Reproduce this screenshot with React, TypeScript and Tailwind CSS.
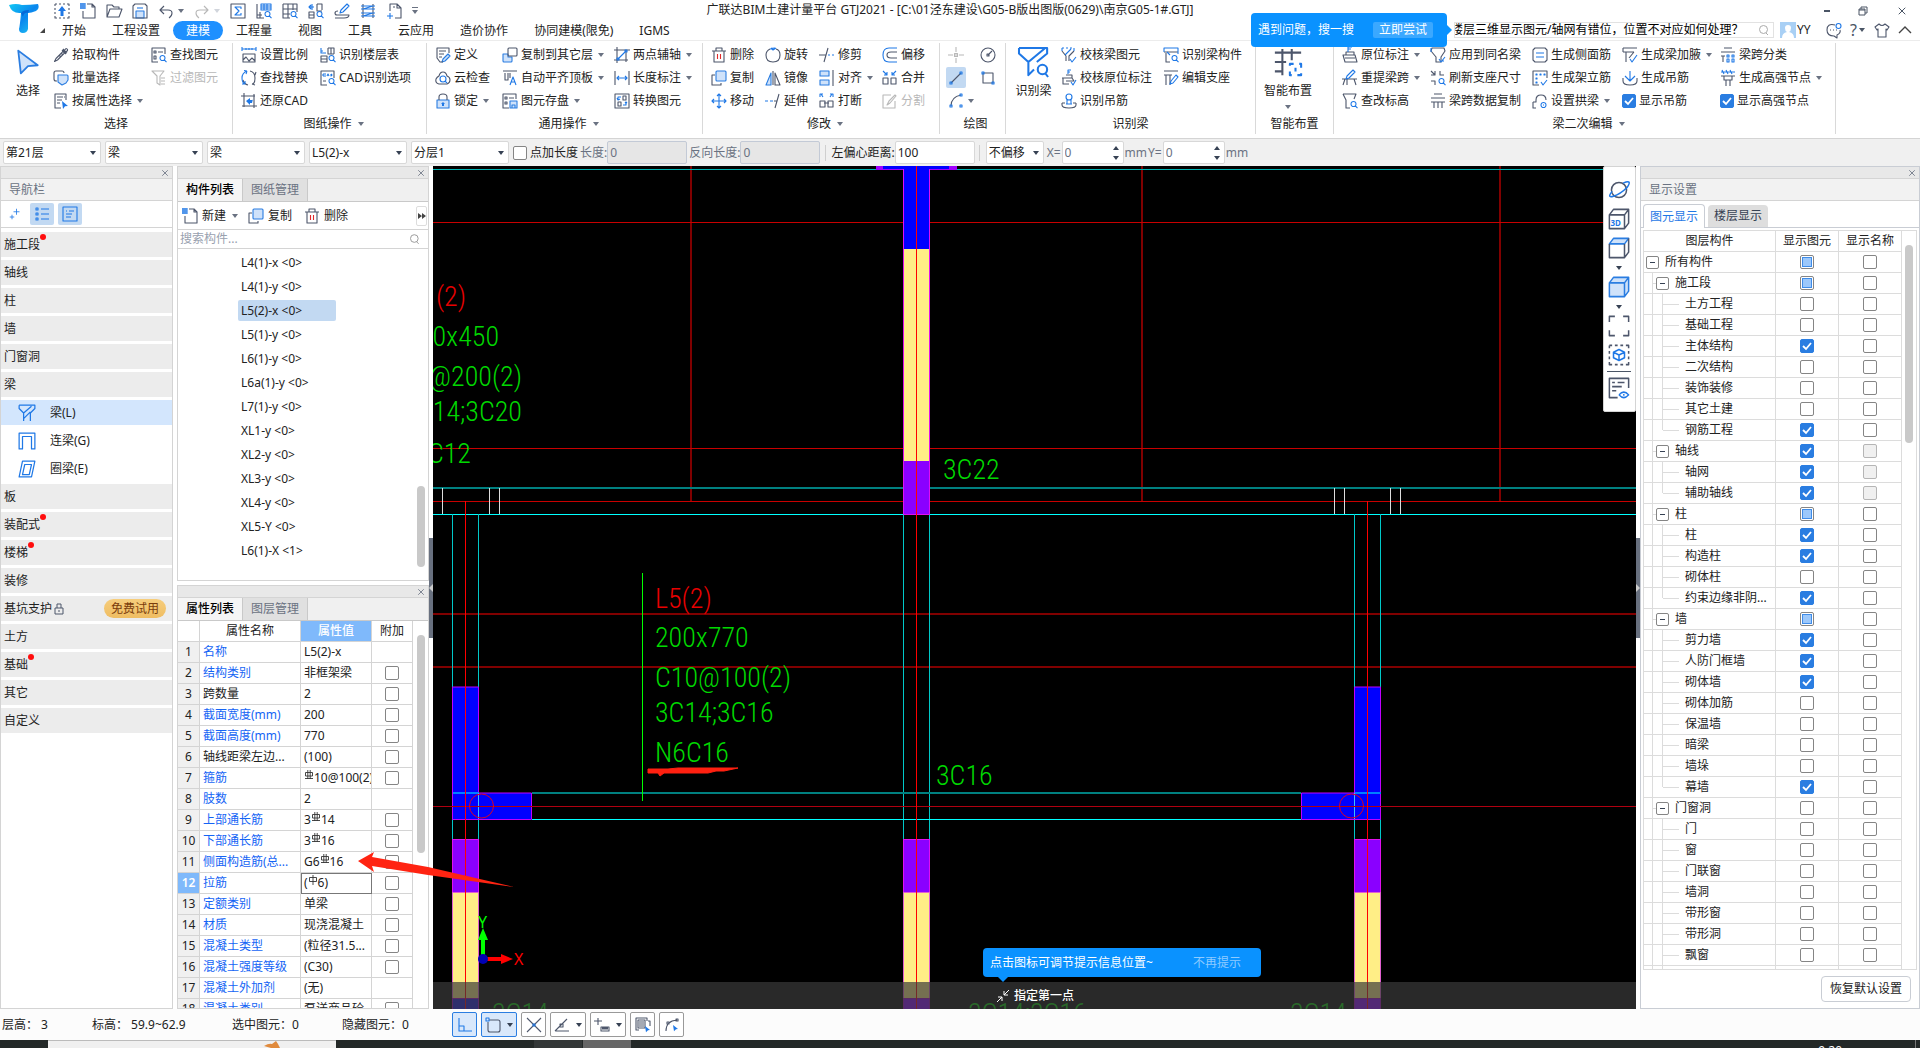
import React from 'react';
import { X } from 'lucide-react';

type Glyph = { d?: string; b?: string; f?: string; s?: string };

const MAG = 'M14 11a2.5 2.5 0 1 1-5 0a2.5 2.5 0 1 1 5 0M13.3 12.8l2.2 2.4';

// d: dark strokes, b: blue strokes, f: blue strokes with a pale fill, s: solid blue
const GLYPHS: Record<string, Glyph> = {
  upload: { d: 'M1 1h2M5 1h2M9 1h2M13 1h2v2M15 5v2M15 9v2M15 13v2h-2M11 15H9M7 15H5M3 15H1v-2M1 11V9M1 7V5M1 3V1', s: 'M8 3l4 5H9.5v5h-3V8H4z' },
  newdoc: { d: 'M7 1h5l3 3v11H3V8M12 1v3h3', b: 'M0 1h5M0 3h5M0 5h5M1 0v6M3 0v6M5 0v6' },
  open: { d: 'M1 14V2h5l2 2h5v2M1 14l3-8h12l-3 8z' },
  save: { d: 'M1 3l2-2h10l2 2v12H1z', f: 'M4 8h8v7H4z', b: 'M5 5h6' },
  undo: { d: 'M6 3L2 7l4 4M2 7h8q4 0 4 3t-3 5' },
  redo: { d: 'M10 3l4 4-4 4M14 7H6q-4 0-4 3t3 5' },
  sigma: { d: 'M1 1h14v14H1z', b: 'M11 6V4H5l4 4-4 4h6v-2' },
  gridfind: { d: 'M1 1v14h7M4 9v6M1 12h5', b: 'M5 1h10v6H5zM5 3h10M5 5h10M8 1v6M11 1v6' + MAG },
  tablefind: { d: 'M1 1h14v8M1 1v14h7M1 6h14M1 11h7M6 1v14M11 1v6', b: MAG },
  swapfind: { d: 'M9 1h5v6M9 1v7h5M1 9h5v6H1zM1 12h5', b: 'M6 4H1l2-2M1 4l2 2M4 1v6' + MAG },
  pen: { d: 'M1 15h9q5 0 5-3H3q-2 0-2-2t3-2', b: 'M13 1l2 2-6 6-3 1 1-3z' },
  rail: { d: 'M3 1v14M13 1v14', b: 'M1 3h14M1 6h14M1 10h14M1 13h14M3 6l10-3M3 13l10-3' },
  addpage: { d: 'M4 8V1h7l4 4v10H9M11 1v4h4M7 4l2 0', b: 'M4 10v6M1 13h6' },
  pointer: { f: 'M2 1l12 9-6 .6L3.600 15z' },
  dropper: { d: 'M9 3l4 4M10.500 4.500L13 1.500q2 .5 1.500 2L12 6M9.500 5L3 11.500l-1.500 3 3-1.500L11 6.500M9.500 4l2.500 2.500 1-1L10.500 3zM10 2l4 4M8 6l2 2M6 8l2 2' },
  batch: { d: 'M4 11H3q-2 0-2-2V3q0-2 2-2h6q2 0 2 2', f: 'M5 5h9q1 0 1 1v4l-2 3-4 2-4-3z' },
  byattr: { d: 'M13 7V1H2v14h6M4 4h6M4 7h5M4 10h3M11 4h1', s: 'M9 8l6 5-3 .3L10 16z' },
  findel: { d: 'M14 7V1H1v14h6M3 4h2v2H3zM7 5h5M3 9h2v3H3z', b: MAG },
  filter: { d: 'M1 1h12L9 6v9l-3-2V6zM10 8h4M10 11h4M10 14h4' },
  scale: { d: 'M2 7h12v8H2zM2 13l3-3 3 4 3-3 3 3', b: 'M1 2h14M1 0v4M15 0v4M5 1v2M8 1v2M11 1v2' },
  floors: { d: 'M8 1h6v6M8 1v6h6M11 1v6M1 9h6v6H1zM1 12h6', b: 'M1 1v5h5M1 4h2' + MAG },
  replace: { d: 'M9 1q5 1 5 7t-3 6M11 14l3 1M14 5l1-3M7 15q-4-1-5-5', b: 'M6 1Q1 3 1 8t3 6M6 1l-3-.5M6 1L5 4M4 14l-3 0M4 14V11' },
  cad: { d: 'M14 8V1H1v14h6M3 11h3', b: 'M3 4h3M3 6h3M3 4v2M7 6l1-2 1 2M11 4v2q2-1 0-2' + MAG },
  restore: { d: 'M3 0v14M0 3h14M13 1v14M1 13h15', s: 'M5 8l4-3v2h3v-1l-1 4H9v2z' },
  define: { d: 'M14 6V1H2v10l3 4h3M4 4h7M4 7h5M4 10h3', f: 'M13 7l2 2-5 5-3 1 1-3z' },
  cloud: { d: 'M4 14q-4-1-3-5 1-2 3-3Q5 2 8 2t4 4q3 1 3 4t-3 4z', b: 'M11 9a3 3 0 1 1-6 0a3 3 0 1 1 6 0M10 11l2 2' },
  lock: { d: 'M4 7V4q0-3 4-3t4 3v3', f: 'M2 7h12v8H2z', s: 'M8 9l2 2H9v2H7v-2H6z' },
  copyto: { d: 'M7 1h7q1 0 1 1v6q0 1-1 1H7q-1 0-1-1V2q0-1 1-1', f: 'M1 7h5v3h4v4q0 1-1 1H2q-1 0-1-1z' },
  align: { d: 'M1 1h14M3 3v7h3V3M8 3v5', b: 'M8 15l3-8 3 8M9 12h4' },
  store: { d: 'M14 6V1H1v14h6M3 4h2v2H3zM7 5h5M3 9h2v2H3z', f: 'M8 8h7v7H8zM10 12h3v3h-3z' },
  auxaxis: { d: 'M3 0v16M0 3h16M12 3v12M0 13h14', b: 'M4 12l8-8M11 3h2v2h-2zM3 11h2v2H3z' },
  dim: { d: 'M1 1v14M15 1v14', b: 'M3 8h10M5 6L3 8l2 2M11 6l2 2-2 2' },
  convert: { d: 'M1 1h14v14H1zM4 9h3v4H4zM9 3h3v4H9z', b: 'M7 4H4v3M3 5l1 2 2-1M9 12h3V9M11 10l1-1 1 1' },
  trash: { d: 'M1 4h14M5 4V1h6v3M3 4v11h10V4' },
  rotate: { d: 'M5 2Q1 4 1 8q0 7 7 7t7-7q0-5-4-6', b: 'M8 3l3-2M8 3l-2-2M5 2q2-1 5-1' },
  trim: { d: 'M9 1L5 15M0 8h7', b: 'M9 8h2M13 8h2' },
  offset: { b: 'M15 1H7Q1 1 1 8t6 7h8', d: 'M15 5H9Q5 5 5 8t4 3h6' },
  copy: { d: 'M4 5H1v10h9v-2', f: 'M6 1h8q1 0 1 1v8q0 1-1 1H6q-1 0-1-1V2q0-1 1-1' },
  mirror: { d: 'M8 1v14M10 3l5 12h-5z', f: 'M6 3v12H1z' },
  align2: { f: 'M1 1h9v5H1zM1 10h9v5H1z', d: 'M14 0v16' },
  merge: { d: 'M1 8h5v6H1zM9 8h5v6H9z', b: 'M1 1l4 4M5 2v3H2M14 1l-4 4M10 2v3h3' },
  move: { b: 'M8 1v14M1 8h14M6 3l2-2 2 2M6 13l2 2 2-2M3 6L1 8l2 2M13 6l2 2-2 2' },
  extend: { b: 'M0 8h3M5 8h3', d: 'M14 1l-4 14M9 8h3' },
  breakk: { d: 'M1 8h5v6H1zM9 8h5v6H9zM5 10h5', b: 'M4 4L2 1M1 4V1h3M11 4l2-3M14 4V1h-3' },
  split: { d: 'M9 2H1v13h12V8M5 12l2-4 6-6 1 1-6 7z' },
  point: { d: 'M8 0v5M8 11v5M0 8h5M11 8h5M6.500 6.500h3v3h-3zM7 8h2' },
  circle: { d: 'M15 8a7 7 0 1 1-14 0a7 7 0 1 1 14 0M8 8l4-4M7 7h2v2H7z' },
  line: { d: 'M3 13L13 3', b: 'M12 2h2v2h-2zM2 12h2v2H2z' },
  rect: { d: 'M3 3h10v10H3z', b: 'M2 2h2v2H2zM12 12h2v2h-2z' },
  arc: { d: 'M3 13Q3 4 13 2', b: 'M12 1h2v2h-2zM2 12h2v2H2zM12 12h2v2h-2z' },
  beam: { b: 'M1 1h14v3l-4 4v7M1 1v3l4 4v7M5 8l7-6M5 13l6-6' },
  findbeam: { b: 'M0 .5h15v3L9.500 8M0 .5v3L5 8v7l3-3M5 8l9-7.500M15 12a2.500 2.500 0 1 1-5 0a2.500 2.500 0 1 1 5 0M14 14l1.500 2' },
  chkbeam: { d: 'M13 4l-5 5v5M1 4l4 5v5', b: 'M1 1h2M5 1h2M9 1h2M13 1v3M1 1v3M4 8l6-6M9 12l2 3 4-5' },
  chktag: { d: 'M1 8h10l2 3H5M2 8v6h6M5 5h6v3', b: 'M7 4V0h3M7 2h2M10 12l2 3 3-5' },
  hook: { d: 'M1 10v2q0 3 7 3t7-3v-2M1 10h3M12 10h3', b: 'M11 4a3 3 0 1 1-6 0a3 3 0 1 1 6 0M6 7v4M10 7v4M5 11h6' },
  recog: { d: 'M1 5h14M3 6v9h4', b: 'M1 5V1h14v6M4 5l3 3' + MAG },
  support: { d: 'M1 1h14M1 5h8M3 5v10M7 5v10', b: 'M13 5l2 2-5 6-3 1 1-3z' },
  smart: { d: 'M1 3h14M1 8h6M1 13h4M5 1v14M10 1v6', b: 'M9 10V9h2M14 9h1v2M15 14v1h-2M10 15H9v-2M12 11v2' },
  tag: { d: 'M1 8h12l2 7H3zM3 11h10M4 8V5h8v3', b: 'M6 5V0h4M6 2h3' },
  respan: { d: 'M0 9h15M3 9l-2 6M12 9l2 6M5 9v6', b: 'M11 0l2 2-6 6-3 1 1-3z' },
  level: { d: 'M1 1h13l-2 5M1 1l3 6v8h4', b: MAG },
  same: { d: 'M2 1h12l1 3-4 6v5H6v-5L1 4z', b: 'M1 1v4M9 12l2 3 4-5M12 14h2' },
  refresh: { d: 'M5 1v4H1M10 1v4h4M5 15v-4H1M1 1l4 4', b: MAG },
  spancopy: { d: 'M4 1h8M1 5h14M1 9h14M4 9v6M8 9v6M12 9v6' },
  side: { d: 'M1 3l2-2h10l2 2v10l-2 2H3l-2-2z', b: 'M4 6h8M4 10h8' },
  stirrup: { d: 'M7 15H1V1h14v7', b: 'M4 4h1v1H4zM8 4h1v1H8zM12 4h1v1h-1zM4 8h1v1H4zM4 12h1v1H4zM9 12l2 3 4-5' },
  arch: { d: 'M1 9h3V7q0-5 5-5t5 5M1 9v6h3', b: 'M14 12a2.500 2.500 0 1 1-5 0a2.500 2.500 0 1 1 5 0M11 12h1' },
  haunch: { d: 'M1 1h14M1 5h11M4 5v10M1 5V1M12 5L7 11', b: 'M8 12l2 3 5-7' },
  hanger: { d: 'M1 8v3q0 4 7 4t7-4V8', b: 'M8 1v9M5 8l3 3 3-3M3 6l2 2M13 6l-2 2' },
  classify: { d: 'M4 1h8M1 5h14M1 9h4M3 9v6', b: 'M7 8h2v2H7zM12 8h2v2h-2zM7 12h2v3H7zM12 12h2v3h-2z' },
  node: { d: 'M1 6h14M4 6v4h8V6M6 10v6M10 10v6', b: 'M1 2h14M2 0l2 4M6 0l2 4M10 0l2 4' },
  spark: { b: 'M10 1v8M6 5h8M4 9v6M1 12h6' },
  list: { b: 'M2 2h2v2H2zM2 7h2v2H2zM2 12h2v2H2zM7 3h8M7 8h8M7 13h8' },
  note: { b: 'M1 1h14v14H1zM4 5h1M7 5h5M4 8h6M4 11h5' },
  linkbeam: { b: 'M1 15V1h14v14h-3V4H4v11z' },
  ringbeam: { b: 'M4 1h11l-3 14H1zM6 4h6l-2 9H4z' },
  planet: { d: 'M13.500 8a5.500 5.500 0 1 1-11 0a5.500 5.500 0 1 1 11 0', b: 'M3 9Q-1 14 4 12.500T14 6q4-6-3-3' },
  cube: { d: 'M1 5h11v10H1zM1 5l3-4h11v10l-3 4M12 5l3-4' },
  cubetop: { d: 'M1 5v10h11V5M15 1v10l-3 4', f: 'M1 5l3-4h11l-3 4z' },
  cubefill: { f: 'M1 5h11v10H1zM1 5l3-4h11l-3 4zM12 5l3-4v10l-3 4z' },
  fit: { d: 'M1 5V1h4M11 1h4v4M15 11v4h-4M5 15H1v-4' },
  isolate: { d: 'M1 1h2M5 1h2M9 1h2M13 1h2v2M15 5v2M15 9v2M15 13v2h-2M11 15H9M7 15H5M3 15H1v-2M1 11V9M1 7V5M1 3V1', b: 'M8 4l4 2v4l-4 2-4-2V6zM4 6l4 2 4-2M8 8v4' },
  listeye: { d: 'M15 8V1H1v14h6M3 4h2M7 4h5M3 7h7M3 10h3', b: 'M8 13q3.500-4 7 0-3.500 4-7 0M11 13h1' },
  ortho: { b: 'M2 1v13h13M2 9h5v5' },
  quad: { d: 'M4 3h9q2 0 2 2v8q0 2-2 2H5q-2 0-2-2V5', b: 'M1 1h3v3H1z' },
  cross: { d: 'M1 1l14 14M15 1L1 15', b: 'M7 7h2v2H7z' },
  angle: { d: 'M1 14h14M1 14L13 2M6 7h3v3H6z' },
  plusbox: { d: 'M4 1v7M0 4h8M7 10h8v4H7zM8 12h6M8 11h6' },
  stack: { d: 'M4 13H1V1h11v3M3 3h7v8H3zM4 5h5M4 7h5M4 9h5M13 4h2v5', s: 'M10 9l5 4-2 .3-2 2z' },
  curve: { d: 'M2 14Q2 4 13 3M12 2h2v2h-2zM3 5h2v2H3z', s: 'M9 8l5 4-2 .3-2 2z' },
  bubble: { d: 'M9 3Q1 1 1 8q0 6 7 6l3 2v-3q4-2 3-5M4 8h1M7 8h1M10 8h1', b: 'M15 4a2.500 2.500 0 1 1-5 0a2.500 2.500 0 1 1 5 0' },
  shirt: { d: 'M5 2L1 5l2 3 1-1v8h8V7l1 1 2-3-4-3q-3 3-6 0z' },
};

function Icon({ name, className = 'size-4', off = false }: { name: string; className?: string; off?: boolean }) {
  const g = GLYPHS[name];
  const dark = off ? '#b8b8b8' : '#4d566b';
  return (
    <svg viewBox="0 0 16 16" className={`shrink-0 overflow-visible ${className}`} fill="none" strokeWidth="1.1" strokeLinejoin="round">
      {g.f && <path d={g.f} stroke="#2a7de1" fill="#cfe2fa" />}
      {g.d && <path d={g.d} stroke={dark} />}
      {g.b && <path d={g.b} stroke={off ? '#b8b8b8' : '#1f78e6'} />}
      {g.s && <path d={g.s} fill="#1f78e6" />}
      {name === 'trash' && <path d="M6.500 7v5M9.500 7v5" stroke="#e02b2b" />}
    </svg>
  );
}

function Caret({ className = 'text-gray-500' }: { className?: string }) {
  return (
    <svg viewBox="0 0 6 4" className={`h-1 w-1.5 shrink-0 ${className}`}>
      <path d="M0 0h6L3 4z" fill="currentColor" />
    </svg>
  );
}

type CheckState = 'on' | 'off' | 'mixed' | 'disabled';

function Check({ state = 'off', label, id }: { state?: CheckState; label?: string; id?: string }) {
  return (
    <span className="relative inline-block size-3.5 shrink-0 align-middle">
      <input
        id={id}
        type="checkbox"
        aria-label={label}
        defaultChecked={state === 'on'}
        disabled={state === 'disabled'}
        className="block size-3.5 appearance-none rounded-xs border border-[#858585] bg-white checked:border-[#2a7de1] checked:bg-[#2a7de1] disabled:border-[#b5b5b5] disabled:bg-[#f0f0f0]"
      />
      {state === 'on' && (
        <svg viewBox="0 0 14 14" className="pointer-events-none absolute inset-0" fill="none" stroke="white" strokeWidth="1.8">
          <path d="M3 7l3 3 5-6" />
        </svg>
      )}
      {state === 'mixed' && <span className="pointer-events-none absolute inset-0.5 border border-[#3f8ce8] bg-[#9cc8fb]" />}
    </span>
  );
}

type Item = { icon: string; text: string; caret?: boolean; off?: boolean; check?: boolean };

function ToolColumn({ items, className }: { items: Item[]; className: string }) {
  return (
    <div className={`flex shrink-0 flex-col ${className}`}>
      {items.map((it) =>
        it.check ? (
          <label key={it.text} className="flex h-[23px] items-center gap-[3px] whitespace-nowrap">
            <Check state="on" />
            {it.text}
          </label>
        ) : (
          <button key={it.text} disabled={it.off} className={`flex h-[23px] items-center gap-[3px] whitespace-nowrap ${it.off ? 'text-[#b8b8b8]' : ''}`}>
            <Icon name={it.icon} off={it.off} />
            <span>{it.text}</span>
            {it.caret && <Caret className="ml-0.5 text-gray-500" />}
          </button>
        ),
      )}
    </div>
  );
}

function Group({ label, caret, className = '', children }: { label: string; caret?: boolean; className?: string; children: React.ReactNode }) {
  return (
    <section className={`flex shrink-0 flex-col border-r border-[#d9d9d9] ${className}`}>
      <div className="flex h-[72px]">{children}</div>
      <div className="flex h-5 items-center justify-center gap-1.5">
        {label}
        {caret && <Caret className="text-gray-500" />}
      </div>
    </section>
  );
}

function BigButton({ icon, text, caret, className, size = 'size-[30px]' }: { icon: string; text: string; caret?: boolean; className: string; size?: string }) {
  return (
    <button className={`flex shrink-0 flex-col items-center pt-1 ${className}`}>
      <span className="flex h-[30px] items-center"><Icon name={icon} className={size} /></span>
      <span className="mt-1.5">{text}</span>
      {caret && <Caret className="mt-1.5 text-gray-500" />}
    </button>
  );
}

const QUICK = ['upload', 'newdoc', 'open', 'save'];
const QUICK2 = ['sigma', 'gridfind', 'tablefind', 'swapfind', 'pen', 'rail', 'addpage'];
const TABS = ['开始', '工程设置', '建模', '工程量', '视图', '工具', '云应用', '造价协作', '协同建模(限免)', 'IGMS'];

function TitleArea() {
  return (
    <header className="relative flex h-[41px] border-b border-[#ececec] bg-white">
      <div className="flex w-[49px] shrink-0 pt-1 pl-2">
        <svg viewBox="0 0 32 30" className="h-[30px] w-8">
          <defs>
            <linearGradient id="logo" x1="0" y1="0" x2="1" y2="1">
              <stop offset="0" stopColor="#12c8f4" />
              <stop offset="0.5" stopColor="#0a86ee" />
              <stop offset="1" stopColor="#25d0f5" />
            </linearGradient>
          </defs>
          <path d="M1 1Q8-1 14 1q8 0 16-1 2 5-2 7-5 2-8 2 0 5 0 16-1 4-5 4t-4-4q1-4 2-16-9 1-12-8z" fill="url(#logo)" />
          <path d="M13 9q2-3 8-3l-1 3q-4-1-5 4z" fill="#0569d8" />
        </svg>
        <svg viewBox="0 0 5 5" className="mt-6 size-[5px]">
          <path d="M5 0v5H0z" fill="#444" />
        </svg>
      </div>
      <div className="flex flex-col">
        <div className="flex h-[22px] items-center gap-2.5 pl-[5px]">
          {QUICK.map((n) => (
            <button key={n} aria-label={n}><Icon name={n} /></button>
          ))}
          <button aria-label="undo" className="flex items-center gap-1"><Icon name="undo" /><Caret /></button>
          <button aria-label="redo" className="flex items-center gap-1"><Icon name="redo" off /><Caret className="text-gray-300" /></button>
          {QUICK2.map((n) => (
            <button key={n} aria-label={n}><Icon name={n} /></button>
          ))}
          <button aria-label="more" className="flex flex-col items-center gap-0.5">
            <span className="h-px w-1.5 bg-gray-500" />
            <Caret />
          </button>
        </div>
        <nav className="flex h-[19px]">
          {TABS.map((t) => (
            <button key={t} className={`flex items-center px-[13px] ${t === '建模' ? 'rounded-full bg-[#1e90ff] text-white' : ''}`}>
              {t}
            </button>
          ))}
        </nav>
      </div>
      <h1 className="pt-0.5 pl-6 font-normal whitespace-nowrap">
        广联达BIM土建计量平台 GTJ2021 - [C:\01泾东建设\G05-B版出图版(0629)\南京G05-1#.GTJ]
      </h1>
      <div className="ml-auto flex flex-col">
        <div className="flex h-[22px] items-center justify-end gap-7 pr-3 text-gray-600">
          <button aria-label="minimize"><span className="block h-0.5 w-1.5 bg-gray-600" /></button>
          <button aria-label="restore">
            <svg viewBox="0 0 10 10" className="size-2.5" fill="none" stroke="currentColor"><path d="M1 3h6v6H1zM3 3V1h6v6H7M1 4h6" /></svg>
          </button>
          <button aria-label="close"><X size={12} /></button>
        </div>
        <div className="flex h-4 items-center">
          <div className="flex h-4 w-80 items-center border border-[#e2e2e2]">
            <input
              aria-label="搜索"
              defaultValue="楼层三维显示图元/轴网有错位，位置不对应如何处理？"
              className="w-[304px] -indent-1 text-black outline-none"
            />
            <svg viewBox="0 0 10 10" className="size-2.5" fill="none" stroke="#aaa"><circle cx="4.500" cy="4.500" r="4" /><path d="M7 8l2 2" /></svg>
          </div>
          <svg viewBox="0 0 16 16" className="ml-1.5 size-4">
            <path d="M0 0h16v16H0z" fill="#a9d0f5" />
            <path d="M8 3q3 0 3 3t-2 4q5 1 5 6H2q0-5 5-6-2-1-2-4t3-3z" fill="#fff" />
          </svg>
          <span className="w-[30px] pl-px">YY</span>
          <button aria-label="messages"><Icon name="bubble" /></button>
          <button aria-label="help" className="ml-2 flex w-5 items-center text-base leading-4 text-gray-600">?<Caret className="ml-0.5 text-gray-600" /></button>
          <button aria-label="skin" className="ml-1"><Icon name="shirt" /></button>
          <button aria-label="collapse" className="mr-2 ml-2">
            <svg viewBox="0 0 14 8" className="h-2 w-3.5" fill="none" stroke="#444" strokeWidth="1.4"><path d="M1 7l6-6 6 6" /></svg>
          </button>
        </div>
      </div>
      <div className="absolute top-[13px] right-[473px] z-10 flex h-[34px] w-[196px] items-center justify-between rounded-sm bg-[#0a92ff] pr-3.5 pl-[7px] whitespace-nowrap text-white">
        <span>遇到问题，搜一搜</span>
        <button className="rounded-xs bg-[#3ba8ff] px-1.5">立即尝试</button>
        <svg viewBox="0 0 5 10" className="absolute top-3 left-full h-2.5 w-[5px]"><path d="M0 0l5 5-5 5z" fill="#0a92ff" /></svg>
      </div>
    </header>
  );
}

function Ribbon() {
  return (
    <div className="flex h-[98px] border-b border-[#d4d4d4] bg-white pt-0.5 pb-1">
      <Group label="选择" className="w-[233px]">
        <BigButton icon="pointer" text="选择" className="w-[53px] pl-[3px]" size="size-[26px]" />
        <ToolColumn className="w-[98px]" items={[{ icon: 'dropper', text: '拾取构件' }, { icon: 'batch', text: '批量选择' }, { icon: 'byattr', text: '按属性选择', caret: true }]} />
        <ToolColumn className="w-20" items={[{ icon: 'findel', text: '查找图元' }, { icon: 'filter', text: '过滤图元', off: true }]} />
      </Group>
      <Group label="图纸操作" caret className="w-[194px] pl-2">
        <ToolColumn className="w-[79px]" items={[{ icon: 'scale', text: '设置比例' }, { icon: 'replace', text: '查找替换' }, { icon: 'restore', text: '还原CAD' }]} />
        <ToolColumn className="w-24" items={[{ icon: 'floors', text: '识别楼层表' }, { icon: 'cad', text: 'CAD识别选项' }]} />
      </Group>
      <Group label="通用操作" caret className="w-[276px] pl-2">
        <ToolColumn className="w-[67px]" items={[{ icon: 'define', text: '定义' }, { icon: 'cloud', text: '云检查' }, { icon: 'lock', text: '锁定', caret: true }]} />
        <ToolColumn className="w-28" items={[{ icon: 'copyto', text: '复制到其它层', caret: true }, { icon: 'align', text: '自动平齐顶板', caret: true }, { icon: 'store', text: '图元存盘', caret: true }]} />
        <ToolColumn className="w-20" items={[{ icon: 'auxaxis', text: '两点辅轴', caret: true }, { icon: 'dim', text: '长度标注', caret: true }, { icon: 'convert', text: '转换图元' }]} />
      </Group>
      <Group label="修改" caret className="w-[237px] pl-2">
        <ToolColumn className="w-[54px]" items={[{ icon: 'trash', text: '删除' }, { icon: 'copy', text: '复制' }, { icon: 'move', text: '移动' }]} />
        <ToolColumn className="w-[54px]" items={[{ icon: 'rotate', text: '旋转' }, { icon: 'mirror', text: '镜像' }, { icon: 'extend', text: '延伸' }]} />
        <ToolColumn className="w-[63px]" items={[{ icon: 'trim', text: '修剪' }, { icon: 'align2', text: '对齐', caret: true }, { icon: 'breakk', text: '打断' }]} />
        <ToolColumn className="w-[54px]" items={[{ icon: 'offset', text: '偏移' }, { icon: 'merge', text: '合并' }, { icon: 'split', text: '分割', off: true }]} />
      </Group>
      <Group label="绘图" className="w-[66px] pl-1.5">
        <div className="flex w-8 flex-col">
          <button aria-label="点" className="flex h-[23px] w-5 items-center justify-center"><Icon name="point" off /></button>
          <button aria-label="直线" className="my-px flex h-[21px] w-5 items-center justify-center rounded-xs bg-[#c2d9f2]"><Icon name="line" /></button>
          <button aria-label="弧" className="flex h-[23px] items-center gap-1 pl-0.5"><Icon name="arc" /><Caret /></button>
        </div>
        <div className="flex w-5 flex-col">
          <button aria-label="圆" className="flex h-[23px] items-center justify-center"><Icon name="circle" /></button>
          <button aria-label="矩形" className="flex h-[23px] items-center justify-center"><Icon name="rect" /></button>
        </div>
      </Group>
      <Group label="识别梁" className="w-[250px]">
        <BigButton icon="findbeam" text="识别梁" className="w-[55px]" />
        <ToolColumn className="w-[102px]" items={[{ icon: 'chkbeam', text: '校核梁图元' }, { icon: 'chktag', text: '校核原位标注' }, { icon: 'hook', text: '识别吊筋' }]} />
        <ToolColumn className="w-20" items={[{ icon: 'recog', text: '识别梁构件' }, { icon: 'support', text: '编辑支座' }]} />
      </Group>
      <Group label="智能布置" className="w-[78px]">
        <BigButton icon="smart" text="智能布置" caret className="w-16" />
      </Group>
      <Group label="梁二次编辑" caret className="w-[502px] pl-2">
        <ToolColumn className="w-[88px]" items={[{ icon: 'tag', text: '原位标注', caret: true }, { icon: 'respan', text: '重提梁跨', caret: true }, { icon: 'level', text: '查改标高' }]} />
        <ToolColumn className="w-[102px]" items={[{ icon: 'same', text: '应用到同名梁' }, { icon: 'refresh', text: '刷新支座尺寸' }, { icon: 'spancopy', text: '梁跨数据复制' }]} />
        <ToolColumn className="w-[90px]" items={[{ icon: 'side', text: '生成侧面筋' }, { icon: 'stirrup', text: '生成架立筋' }, { icon: 'arch', text: '设置拱梁', caret: true }]} />
        <ToolColumn className="w-[98px]" items={[{ icon: 'haunch', text: '生成梁加腋', caret: true }, { icon: 'hanger', text: '生成吊筋' }, { icon: '', text: '显示吊筋', check: true }]} />
        <ToolColumn className="w-[110px]" items={[{ icon: 'classify', text: '梁跨分类' }, { icon: 'node', text: '生成高强节点', caret: true }, { icon: '', text: '显示高强节点', check: true }]} />
      </Group>
    </div>
  );
}

function Drop({ value, className }: { value: string; className: string }) {
  return (
    <span className={`relative flex h-[23px] shrink-0 items-center rounded-xs border border-[#d8d8d8] bg-white ${className}`}>
      <select aria-label={value} className="h-full w-full appearance-none pl-0.5 outline-none">
        <option>{value}</option>
      </select>
      <span className="pointer-events-none absolute right-1 flex"><Caret className="text-gray-700" /></span>
    </span>
  );
}

function Field({ id, label, value, off, className }: { id: string; label: string; value: string; off?: boolean; className: string }) {
  return (
    <>
      <label htmlFor={id} className={`whitespace-nowrap ${off ? 'text-gray-500' : ''}`}>{label}</label>
      <input
        id={id}
        defaultValue={value}
        disabled={off}
        className={`h-[23px] rounded-xs border pl-0.5 ${off ? 'border-[#c3cad6] bg-[#e6e6e6] text-gray-500' : 'border-[#d8d8d8] bg-white'} ${className}`}
      />
    </>
  );
}

function Spin({ id, label }: { id: string; label: string }) {
  return (
    <span className="flex items-center text-gray-500">
      <label htmlFor={id} className="pr-px">{label}</label>
      <span className="flex h-[23px] w-[62px] items-center justify-between rounded-xs border border-[#d8d8d8] bg-white pr-1">
        <input id={id} defaultValue="0" className="w-10 pl-0.5 outline-none" />
        <span className="flex flex-col gap-1.5">
          <Caret className="rotate-180 text-gray-700" />
          <Caret className="text-gray-700" />
        </span>
      </span>
      <span className="pl-px">mm</span>
    </span>
  );
}

function OptionBar() {
  return (
    <div className="flex h-[27px] items-center bg-[#f0f0f0] pl-[3px]">
      <div className="flex gap-1">
        <Drop value="第21层" className="w-[98px]" />
        <Drop value="梁" className="w-[98px]" />
        <Drop value="梁" className="w-[98px]" />
        <Drop value="L5(2)-x" className="w-[98px]" />
        <Drop value="分层1" className="w-[98px]" />
      </div>
      <label className="mr-0.5 ml-1 flex items-center gap-[3px] whitespace-nowrap">
        <Check />
        点加长度
      </label>
      <Field id="len" label="长度:" value="0" off className="mr-0.5 w-20" />
      <Field id="rlen" label="反向长度:" value="0" off className="w-20" />
      <span className="mx-[5px] h-4 w-px bg-[#cfcfcf]" />
      <Field id="ecc" label="左偏心距离:" value="100" className="w-20" />
      <span className="mr-1.5 ml-1 h-4 w-px bg-[#cfcfcf]" />
      <Drop value="不偏移" className="mr-[3px] w-[58px]" />
      <Spin id="ox" label="X=" />
      <span className="w-px" />
      <Spin id="oy" label="Y=" />
    </div>
  );
}

function PanelTop() {
  return (
    <div className="flex h-3 shrink-0 items-center justify-end border-b border-[#d4d4d4] bg-[#e8e8e8] pr-0.5">
      <button aria-label="关闭"><X size={10} className="text-gray-500" /></button>
    </div>
  );
}

type NavItem = { text: string; dot?: boolean; trial?: boolean; icon?: string; active?: boolean };

const NAV: NavItem[] = [
  { text: '施工段', dot: true },
  { text: '轴线' },
  { text: '柱' },
  { text: '墙' },
  { text: '门窗洞' },
  { text: '梁' },
  { text: '梁(L)', icon: 'beam', active: true },
  { text: '连梁(G)', icon: 'linkbeam' },
  { text: '圈梁(E)', icon: 'ringbeam' },
  { text: '板' },
  { text: '装配式', dot: true },
  { text: '楼梯', dot: true },
  { text: '装修' },
  { text: '基坑支护', trial: true },
  { text: '土方' },
  { text: '基础', dot: true },
  { text: '其它' },
  { text: '自定义' },
];

function NavPanel() {
  return (
    <aside className="flex w-[173px] shrink-0 flex-col border border-[#d4d4d4] bg-white">
      <PanelTop />
      <div className="h-[22px] border-b border-[#d4d4d4] bg-[#f2f2f2] pl-2 leading-[21px] text-gray-500">导航栏</div>
      <div className="flex h-[27px] items-center gap-1 border-b border-[#d4d4d4] pl-1">
        <button aria-label="展开" className="flex w-[21px] items-center pl-1"><Icon name="spark" className="size-3" /></button>
        <button aria-label="列表" className="flex h-[22px] w-6 items-center justify-center rounded-xs bg-[#c2d9f2]"><Icon name="list" /></button>
        <button aria-label="详情" className="flex h-[22px] w-6 items-center justify-center rounded-xs bg-[#c2d9f2]"><Icon name="note" /></button>
      </div>
      <ul className="flex flex-col gap-[3px] pt-1">
        {NAV.map((n) => (
          <li key={n.text}>
            <button
              className={`flex h-[25px] w-full items-center ${n.icon ? 'gap-3.5 pl-[17px]' : 'bg-[#ececec] pr-1.5 pl-[3px]'} ${n.active ? 'bg-[#d3e6fd]' : ''}`}
            >
              {n.icon && <Icon name={n.icon} className="size-[18px]" />}
              <span>{n.text}</span>
              {n.dot && <span className="mb-4 size-1.5 rounded-full bg-[#ff0d0d]" />}
              {n.trial && (
                <>
                  <svg viewBox="0 0 10 12" className="ml-0.5 h-3 w-2.5" fill="none" stroke="#4d566b">
                    <path d="M1 5h8v6H1zM3 5V1h4v4M5 7v2" />
                  </svg>
                  <span className="ml-auto rounded-full bg-linear-to-b from-[#f6cd7c] to-[#efbd62] px-[7px] leading-[19px] text-[#7a3c0c]">免费试用</span>
                </>
              )}
            </button>
          </li>
        ))}
      </ul>
    </aside>
  );
}

function PanelTabs({ tabs }: { tabs: [string, string] }) {
  return (
    <div className="flex h-[23px] shrink-0 border-b border-[#c9c9c9] bg-[#f0f0f0]">
      <button className="w-[65px] border-r border-[#c9c9c9] bg-[#f5f5f5] font-medium text-black">{tabs[0]}</button>
      <button className="w-[65px] border-r border-[#c9c9c9] bg-[#e0e0e0] text-gray-500">{tabs[1]}</button>
    </div>
  );
}

const COMPONENTS = [
  'L4(1)-x <0>', 'L4(1)-y <0>', 'L5(2)-x <0>', 'L5(1)-y <0>', 'L6(1)-y <0>', 'L6a(1)-y <0>', 'L7(1)-y <0>',
  'XL1-y <0>', 'XL2-y <0>', 'XL3-y <0>', 'XL4-y <0>', 'XL5-Y <0>', 'L6(1)-X <1>',
];

function ComponentPanel() {
  return (
    <section className="flex h-[415px] shrink-0 flex-col border border-[#d4d4d4] bg-white">
      <PanelTop />
      <PanelTabs tabs={['构件列表', '图纸管理']} />
      <div className="flex h-7 shrink-0 items-center border-b border-[#d4d4d4] pl-1">
        <button className="flex items-center gap-1"><Icon name="newdoc" />新建<Caret className="mr-1.5 ml-0.5 text-gray-500" /></button>
        <button className="ml-1 flex items-center gap-1"><Icon name="copy" />复制</button>
        <button className="ml-3 flex items-center gap-1"><Icon name="trash" />删除</button>
        <button aria-label="更多" className="mr-px ml-auto flex h-5 w-[11px] items-center justify-center rounded-xs border border-[#ddd]">
          <svg viewBox="0 0 8 6" className="h-1.5 w-2 shrink-0"><path d="M0 0l4 3-4 3zM4 0l4 3-4 3z" fill="#444" /></svg>
        </button>
      </div>
      <div className="flex h-[19px] shrink-0 items-center border-b border-[#d4d4d4] pr-2 pl-0.5">
        <input aria-label="搜索构件" placeholder="搜索构件..." className="w-full outline-none placeholder:text-gray-400" />
        <svg viewBox="0 0 10 10" className="size-2.5" fill="none" stroke="#999"><circle cx="4.500" cy="4.500" r="4" /><path d="M7 8l2 2" /></svg>
      </div>
      <div className="relative flex-1">
        <ul className="pt-px pl-[60px]">
          {COMPONENTS.map((c) => (
            <li key={c} className="flex h-6 items-center">
              <span className={`w-[98px] rounded-xs pl-[3px] leading-[21px] whitespace-nowrap ${c === 'L5(2)-x <0>' ? 'bg-[#c2d9f2]' : ''}`}>{c}</span>
            </li>
          ))}
        </ul>
        <div className="absolute right-[3px] bottom-[13px] h-[81px] w-2 rounded-full bg-[#c9c9c9]" />
      </div>
    </section>
  );
}

function Rebar({ grade = 3 }: { grade?: number }) {
  return (
    <svg viewBox="0 0 10 10" className="mb-1.5 inline-block size-2.5 align-middle" fill="none" stroke="#333" strokeWidth="0.9">
      {grade === 3 ? <path d="M1.500 2.500h7v3.500h-7zM3.800 0v9M6.200 0v9M1 8.500h8" /> : <path d="M1.500 2.500h7v4h-7zM5 0v10" />}
    </svg>
  );
}

type Prop = { name: string; value: React.ReactNode; plain?: boolean; noCheck?: boolean };

const PROPS: Prop[] = [
  { name: '名称', value: 'L5(2)-x', noCheck: true },
  { name: '结构类别', value: '非框架梁' },
  { name: '跨数量', value: '2', plain: true },
  { name: '截面宽度(mm)', value: '200' },
  { name: '截面高度(mm)', value: '770' },
  { name: '轴线距梁左边...', value: '(100)', plain: true },
  { name: '箍筋', value: <><Rebar />10@100(2)</> },
  { name: '肢数', value: '2', noCheck: true },
  { name: '上部通长筋', value: <>3<Rebar />14</> },
  { name: '下部通长筋', value: <>3<Rebar />16</> },
  { name: '侧面构造筋(总...', value: <>G6<Rebar />16</> },
  { name: '拉筋', value: <>(<Rebar grade={1} />6)</> },
  { name: '定额类别', value: '单梁' },
  { name: '材质', value: '现浇混凝土' },
  { name: '混凝土类型', value: '(粒径31.5...' },
  { name: '混凝土强度等级', value: '(C30)' },
  { name: '混凝土外加剂', value: '(无)', noCheck: true },
  { name: '混凝土类别', value: '泵送商品砼' },
];

function PropertyPanel() {
  const cell = 'h-[21px] border-r border-b border-[#d4d4d4] p-0';
  return (
    <section className="flex min-h-0 flex-1 flex-col border border-[#d4d4d4] bg-white">
      <PanelTop />
      <PanelTabs tabs={['属性列表', '图层管理']} />
      <div className="relative min-h-0 flex-1 overflow-hidden">
        <table className="w-[235px] table-fixed border-separate border-spacing-0">
          <colgroup>
            <col className="w-[22px]" />
            <col className="w-[101px]" />
            <col className="w-[71px]" />
            <col className="w-[41px]" />
          </colgroup>
          <thead>
            <tr>
              <th className={cell} />
              <th className={`${cell} font-normal`}>属性名称</th>
              <th className={`${cell} bg-[#7fb9fb] font-medium text-white`}>属性值</th>
              <th className={`${cell} font-normal`}>附加</th>
            </tr>
          </thead>
          <tbody>
            {PROPS.map((p, i) => (
              <tr key={p.name}>
                <td className={`${cell} text-center ${i === 11 ? 'bg-[#7fb9fb] font-semibold text-white' : 'bg-[#f0f0f0]'}`}>{i + 1}</td>
                <td className={`${cell} overflow-hidden pl-[3px] whitespace-nowrap ${p.plain ? '' : 'text-[#1464f5]'}`}>{p.name}</td>
                <td className={`${cell} overflow-hidden pl-[3px] leading-4 whitespace-nowrap ${i === 11 ? 'outline -outline-offset-1 outline-[#777]' : ''}`}>{p.value}</td>
                <td className={`${cell} text-center leading-none`}>{!p.noCheck && <Check label={p.name} />}</td>
              </tr>
            ))}
          </tbody>
        </table>
        <div className="absolute top-3.5 right-[3px] h-[218px] w-2 rounded-full bg-[#c9c9c9]" />
      </div>
    </section>
  );
}

// dimension text of the drawing: x, baseline, content
const NOTES: [number, number, string][] = [
  [655, 647, '200x770'],
  [655, 687, 'C10@100(2)'],
  [655, 722, '3C14;3C16'],
  [655, 762, 'N6C16'],
  [936, 785, '3C16'],
  [943, 479, '3C22'],
  [492, 1023, '3C14'],
  [968, 1023, '3C14;3C16'],
  [1290, 1023, '3C14'],
];
const LEFT_NOTES: [number, number, string][] = [
  [499, 346, '0x450'],
  [522, 386, '@200(2)'],
  [522, 421, '14;3C20'],
  [471, 463, 'C12'],
];

function Drawing() {
  return (
    <svg viewBox="433 166 1203 843" preserveAspectRatio="xMidYMid slice" className="absolute inset-0 h-full w-full" fill="none">
      <g strokeWidth="2" stroke="#800000">
        <path d="M691 166V501M1142 166V501M1500 166V501M433 614H1636M433 667H1636" />
      </g>
      <path d="M433 222.500H1636M433 448.500H1636M433 501.500H1636" stroke="#c80000" />
      <path d="M433 169.500H1636" stroke="#00b4b4" />
      <path d="M433 488H1636" stroke="#008080" strokeWidth="2" />
      <path d="M433 514.500H1636" stroke="#00ffff" />
      <path d="M452.500 514V1009M478.500 514V1009M903.500 514V1009M929.500 514V1009M1354.500 514V840M1380.500 514V840" stroke="#00c8c8" />
      <path d="M442.500 488v26M489.500 488v26M499.500 488v26M1334.500 488v26M1344.500 488v26M1390.500 488v26M1400.500 488v26" stroke="#ddd" />
      <path d="M532 793H1301" stroke="#008080" strokeWidth="2" />
      <path d="M532 819.500H1301" stroke="#00ffff" />

      <path d="M876 166h81v4h-81z" fill="#a000ff" />
      <path d="M883 166h66v3h-66zM904 166h26v83h-26z" fill="#0000ff" />
      <path d="M904 249h26v212h-26z" fill="#ffee86" />
      <path d="M904 461h26v53h-26z" fill="#8a00ff" />
      <path d="M903.500 169V514.500h26V169" stroke="#e010f0" />

      <path d="M452.500 687h26v106h53v26.500h-79z" fill="#0000ff" stroke="#c000ff" />
      <path d="M1354.500 687h26v132.500h-79V793h53z" fill="#0000ff" stroke="#c000ff" />
      <path d="M453 793h26M1355 793h26" stroke="#0080ff" strokeWidth="2" />
      <path d="M478.500 793v26M1354.500 793v26" stroke="#40c0ff" />

      {[452.5, 903.5, 1354.5].map((x, i) => (
        <g key={x}>
          <rect x={x} y="839.500" width="26" height="53" fill="#8a00ff" stroke="#e010f0" />
          <rect x={x} y="892.500" width="26" height="106" fill="#ffee86" stroke="#e060d0" />
          <rect x={x} y="998.500" width="26" height="20" fill={i === 0 ? '#1414e0' : '#8a00ff'} stroke="#a000c0" />
        </g>
      ))}
      <path d="M433 806.500H1636" stroke="#b00010" />
      <path d="M465.500 501V1009M916.500 166V1009M1367.500 501V1009" stroke="#ff0000" />
      <circle cx="481.500" cy="806" r="12" stroke="#e00020" />
      <circle cx="1351.500" cy="806" r="12" stroke="#e00020" />
      <path d="M642.500 573V801" stroke="#00ff00" />

      <g className="font-[Roboto_Condensed,Liberation_Sans_Narrow,Roboto] text-[28px] font-light">
        <text x="655" y="608" fill="#e80000">L5(2)</text>
        <text x="466" y="306" textAnchor="end" fill="#e80000">(2)</text>
        {NOTES.map(([x, y, t]) => (
          <text key={`${x}-${y}`} x={x} y={y} fill="#00d800">{t}</text>
        ))}
        {LEFT_NOTES.map(([x, y, t]) => (
          <text key={y} x={x} y={y} textAnchor="end" fill="#00d800">{t}</text>
        ))}
      </g>
      <path d="M648 769h20l10-1h60l-14 3h-8l-8 2h-44l-4 3-2-3h-10z" fill="#ff2010" stroke="#ff2010" strokeLinejoin="round" />

      <path d="M483 956V938" stroke="#00ff00" strokeWidth="4" />
      <path d="M478 940l5-12 5 12z" fill="#00ff00" />
      <path d="M486 959h16" stroke="#ff0000" strokeWidth="4" />
      <path d="M501 954l12 5-12 5z" fill="#ff0000" />
      <circle cx="483" cy="959" r="5" fill="#0000b4" />
      <text x="478" y="928" fill="#00ff00" className="text-base">Y</text>
      <text x="514" y="965" fill="#ff0000" className="text-base">X</text>
    </svg>
  );
}

function ViewTools() {
  return (
    <div className="absolute top-0 right-0 flex h-[246px] w-[33px] flex-col items-center rounded-xs border border-[#d4d4d4] bg-white pt-3 pr-0.5">
      <button aria-label="环绕"><Icon name="planet" className="size-[22px]" /></button>
      <button aria-label="三维" className="relative mt-[7px] flex">
        <Icon name="cube" className="size-[22px]" />
        <span className="absolute bottom-0.5 left-[3px] text-[8px] leading-[10px] font-bold text-[#1f78e6]">3D</span>
      </button>
      <button aria-label="俯视" className="mt-[7px] flex flex-col items-center gap-[7px]"><Icon name="cubetop" className="size-[22px]" /><Caret className="text-gray-700" /></button>
      <button aria-label="实体" className="mt-1.5 flex flex-col items-center gap-[7px]"><Icon name="cubefill" className="size-[22px]" /><Caret className="text-gray-700" /></button>
      <button aria-label="全屏" className="mt-1.5"><Icon name="fit" className="size-[22px]" /></button>
      <button aria-label="隔离" className="mt-[7px]"><Icon name="isolate" className="size-[22px]" /></button>
      <span className="my-[5px] h-px w-6 shrink-0 bg-gray-600" />
      <button aria-label="显示"><Icon name="listeye" className="size-[22px]" /></button>
    </div>
  );
}

function Canvas() {
  return (
    <main className="relative min-w-0 flex-1 overflow-hidden bg-black">
      <Drawing />
      <ViewTools />
      <div className="absolute inset-x-0 bottom-0 flex h-[27px] items-center gap-1 bg-[#3b3b3b]/70 pl-[563px] font-medium text-white">
        <svg viewBox="0 0 14 14" className="size-3.5" fill="none" stroke="white"><path d="M13 1L8 6M8 2v4h4M1 13l5-5M2 8h4v4" /></svg>
        指定第一点
      </div>
      <div className="absolute bottom-8 left-[550px] flex h-[29px] w-[278px] items-center justify-between rounded-sm bg-[#0a92ff] pr-5 pl-[7px] text-white">
        <span>点击图标可调节提示信息位置~</span>
        <button className="text-[#8fcbff]">不再提示</button>
        <svg viewBox="0 0 10 5" className="absolute top-full left-[15px] h-[5px] w-2.5"><path d="M0 0h10L5 5z" fill="#0a92ff" /></svg>
      </div>
    </main>
  );
}

function Splitter({ right }: { right?: boolean }) {
  return (
    <div className="flex w-1 shrink-0 flex-col bg-white pt-[372px]">
      <div className="flex h-[100px] items-center justify-center bg-[#68707f]">
        <svg viewBox="0 0 4 8" className={`h-2 w-1 ${right ? 'rotate-180' : ''}`}><path d="M4 0v8L0 4z" fill="#ccc" /></svg>
      </div>
    </div>
  );
}

type Row = { text: string; level: 0 | 1 | 2; el: CheckState; nm?: CheckState; last?: boolean };

const ROWS: Row[] = [
  { text: '所有构件', level: 0, el: 'mixed' },
  { text: '施工段', level: 1, el: 'mixed' },
  { text: '土方工程', level: 2, el: 'off' },
  { text: '基础工程', level: 2, el: 'off' },
  { text: '主体结构', level: 2, el: 'on' },
  { text: '二次结构', level: 2, el: 'off' },
  { text: '装饰装修', level: 2, el: 'off' },
  { text: '其它土建', level: 2, el: 'off' },
  { text: '钢筋工程', level: 2, el: 'on', last: true },
  { text: '轴线', level: 1, el: 'on', nm: 'disabled' },
  { text: '轴网', level: 2, el: 'on', nm: 'disabled' },
  { text: '辅助轴线', level: 2, el: 'on', nm: 'disabled', last: true },
  { text: '柱', level: 1, el: 'mixed' },
  { text: '柱', level: 2, el: 'on' },
  { text: '构造柱', level: 2, el: 'on' },
  { text: '砌体柱', level: 2, el: 'off' },
  { text: '约束边缘非阴...', level: 2, el: 'on', last: true },
  { text: '墙', level: 1, el: 'mixed' },
  { text: '剪力墙', level: 2, el: 'on' },
  { text: '人防门框墙', level: 2, el: 'on' },
  { text: '砌体墙', level: 2, el: 'on' },
  { text: '砌体加筋', level: 2, el: 'off' },
  { text: '保温墙', level: 2, el: 'off' },
  { text: '暗梁', level: 2, el: 'off' },
  { text: '墙垛', level: 2, el: 'off' },
  { text: '幕墙', level: 2, el: 'on', last: true },
  { text: '门窗洞', level: 1, el: 'off' },
  { text: '门', level: 2, el: 'off' },
  { text: '窗', level: 2, el: 'off' },
  { text: '门联窗', level: 2, el: 'off' },
  { text: '墙洞', level: 2, el: 'off' },
  { text: '带形窗', level: 2, el: 'off' },
  { text: '带形洞', level: 2, el: 'off' },
  { text: '飘窗', level: 2, el: 'off' },
  { text: '', level: 2, el: 'off' },
];

function Minus() {
  return (
    <button aria-label="折叠" className="flex size-[13px] shrink-0 items-center justify-center rounded-xs border border-[#858585] bg-white">
      <span className="h-px w-[5px] bg-gray-700" />
    </button>
  );
}

function DisplayPanel() {
  const cell = 'h-[21px] border-r border-b border-[#dcdcdc] p-0';
  return (
    <aside className="flex w-[280px] shrink-0 flex-col border border-[#c9cdd4] bg-white">
      <PanelTop />
      <div className="h-[22px] shrink-0 border-b border-[#d4d4d4] bg-[#f2f2f2] pl-2 leading-[21px] text-gray-500">显示设置</div>
      <div className="flex h-[27px] shrink-0 items-end gap-[3px] border-b border-[#c9cdd4] pl-0.5">
        <button className="-mb-px h-6 w-[62px] rounded-t-sm border border-b-0 border-[#c9cdd4] bg-white text-[#1f78e6]">图元显示</button>
        <button className="h-[22px] w-[60px] rounded-t-sm bg-[#dedede] text-gray-700">楼层显示</button>
      </div>
      <div className="relative mx-0.5 mt-0.5 min-h-0 flex-1 overflow-hidden border border-[#dcdcdc]">
        <table className="w-[258px] table-fixed border-separate border-spacing-0">
          <colgroup>
            <col className="w-[132px]" />
            <col className="w-[63px]" />
            <col className="w-[63px]" />
          </colgroup>
          <thead>
            <tr>
              <th className={`${cell} font-normal`}>图层构件</th>
              <th className={`${cell} font-normal`}>显示图元</th>
              <th className={`${cell} font-normal`}>显示名称</th>
            </tr>
          </thead>
          <tbody>
            {ROWS.map((r, i) => (
              <tr key={i}>
                <td className={cell}>
                  <div className="flex h-5 items-center whitespace-nowrap">
                    {r.level === 0 && <span className="w-0.5" />}
                    {r.level > 0 && <span className="h-5 w-[9px] shrink-0 border-r border-[#dcdcdc]" />}
                    {r.level === 1 && <span className="h-px w-[3px] bg-[#dcdcdc]" />}
                    {r.level < 2 && <Minus />}
                    {r.level === 2 && (
                      <>
                        <span className="flex h-5 w-2.5 shrink-0 items-start">
                          <span className={`ml-auto w-px bg-[#dcdcdc] ${r.last ? 'h-2.5' : 'h-5'}`} />
                        </span>
                        <span className="h-px w-4 shrink-0 bg-[#dcdcdc]" />
                      </>
                    )}
                    <span className="ml-1.5">{r.text}</span>
                  </div>
                </td>
                <td className={`${cell} text-center leading-none`}><Check state={r.el} label={`${r.text} 显示图元`} /></td>
                <td className={`${cell} text-center leading-none`}><Check state={r.nm} label={`${r.text} 显示名称`} /></td>
              </tr>
            ))}
          </tbody>
        </table>
        <div className="absolute top-3.5 right-[3px] h-[198px] w-2 rounded-full bg-[#c9c9c9]" />
      </div>
      <div className="flex h-[38px] shrink-0 items-center justify-end pr-2">
        <button className="h-[26px] w-[90px] rounded-sm border border-[#c9cdd4] bg-white">恢复默认设置</button>
      </div>
    </aside>
  );
}

const SNAPS = [
  { icon: 'ortho', on: true },
  { icon: 'quad', on: true, caret: true },
  { icon: 'cross' },
  { icon: 'angle', caret: true },
  { icon: 'plusbox', caret: true },
  { icon: 'stack' },
  { icon: 'curve' },
];

function StatusBar() {
  return (
    <footer className="flex h-[31px] shrink-0 items-center bg-[#fcfcfc] pl-0.5">
      <div className="flex w-[450px] whitespace-pre">
        <span className="w-[90px]">层高： 3</span>
        <span className="w-[140px]">标高： 59.9~62.9</span>
        <span className="w-[110px]">选中图元：0</span>
        <span>隐藏图元：0</span>
      </div>
      <div className="flex gap-1">
        {SNAPS.map((s) => (
          <button
            key={s.icon}
            aria-label={s.icon}
            className={`flex h-[25px] items-center justify-center gap-1.5 rounded-xs border ${s.caret ? 'w-9' : 'w-[25px]'} ${s.on ? 'border-[#2a7de1] bg-[#d9e8fb]' : 'border-[#999] bg-white'}`}
          >
            <Icon name={s.icon} />
            {s.caret && <Caret className="text-gray-700" />}
          </button>
        ))}
      </div>
    </footer>
  );
}

function Taskbar() {
  return (
    <div className="flex h-2 shrink-0 overflow-hidden bg-[#232827]">
      <div className="ml-12 flex w-72 justify-end border-t border-[#bbb] bg-[#f0f0f0] pr-[53px]">
        <svg viewBox="0 0 20 7" className="h-[7px] w-5"><path d="M1 5q5-3 8-2l4-3 2 3 2 4H8z" fill="#e08a3c" /></svg>
      </div>
      <div className="ml-[198px] w-12 bg-[#333737]" />
      <div className="ml-px w-12 bg-[#666]" />
      <span className="mr-[73px] ml-auto pt-[3px] text-xs text-white">9:20</span>
      <div className="mr-1 w-px bg-[#777]" />
    </div>
  );
}

export default function App() {
  return (
    <div className="flex h-screen flex-col overflow-hidden bg-[#f0f0f0] font-['Noto_Sans','Noto_Sans_CJK_SC',sans-serif] text-xs text-[#222]">
      <TitleArea />
      <Ribbon />
      <OptionBar />
      <div className="relative flex min-h-0 flex-1 bg-white">
        <NavPanel />
        <div className="ml-1 flex w-[252px] shrink-0 flex-col gap-1">
          <ComponentPanel />
          <PropertyPanel />
        </div>
        <Splitter />
        <Canvas />
        <Splitter right />
        <DisplayPanel />
        <svg viewBox="0 0 156 36" className="pointer-events-none absolute top-[685px] left-[358px] h-9 w-[156px]">
          <path d="M0 10l16-9-2 5 56 10 86 20-86-12-56-9 2 6z" fill="#ff2412" />
        </svg>
      </div>
      <StatusBar />
      <Taskbar />
    </div>
  );
}
